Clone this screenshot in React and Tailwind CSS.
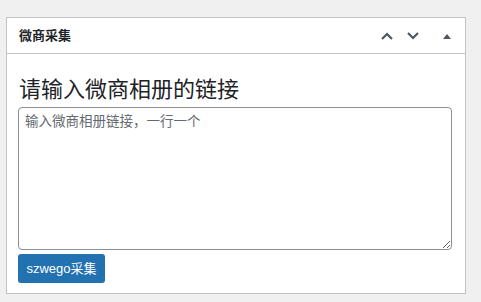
import React from "react";

const font = { fontFamily: '"Liberation Sans", "Noto Sans CJK SC", sans-serif' };

const ChevronUp = () => (
  <svg width="14" height="10" viewBox="0 0 14 10" className="text-[#50575e]">
    <polyline points="2,8 7,3 12,8" fill="none" stroke="currentColor" strokeWidth="2.2" />
  </svg>
);

const ChevronDown = () => (
  <svg width="14" height="10" viewBox="0 0 14 10" className="text-[#50575e]">
    <polyline points="2,2 7,7 12,2" fill="none" stroke="currentColor" strokeWidth="2.2" />
  </svg>
);

const Triangle = () => (
  <svg width="10" height="8" viewBox="0 0 10 8" className="text-[#50575e]">
    <polygon points="1,7 5,2 9,7" fill="currentColor" />
  </svg>
);

export default function App() {
  return (
    <div className="min-h-screen bg-[#f0f0f1] pt-[17px] pl-[6px]" style={font}>
      <div className="w-[460px] h-[277px] border border-[#c3c4c7] bg-white flex flex-col">
        <div className="h-[36px] shrink-0 border-b border-[#c3c4c7] flex items-center justify-between pl-[12px] pr-[13px]">
          <h2 className="text-[13px] font-bold text-[#1d2327]">微商采集</h2>
          <div className="flex items-center">
            <button className="w-[26px] flex justify-center"><ChevronUp /></button>
            <button className="w-[26px] flex justify-center"><ChevronDown /></button>
            <button className="w-[26px] flex justify-end"><Triangle /></button>
          </div>
        </div>
        <div className="px-[11px] pt-[20px]">
          <h3 className="text-[22px] leading-[31px] text-[#1d2327] pl-[1px]">请输入微商相册的链接</h3>
          <textarea
            placeholder="输入微商相册链接，一行一个"
            className="mt-[2px] block w-[434px] h-[143px] border border-[#8c8f94] rounded-[4px] px-[6px] py-[3px] text-[13.5px] leading-[22px] placeholder:text-[#646970] outline-none"
          />
          <button className="mt-[4px] w-[87px] h-[29px] rounded-[3px] bg-[#2271b1] text-white text-[13px]">
            szwego采集
          </button>
        </div>
      </div>
    </div>
  );
}
